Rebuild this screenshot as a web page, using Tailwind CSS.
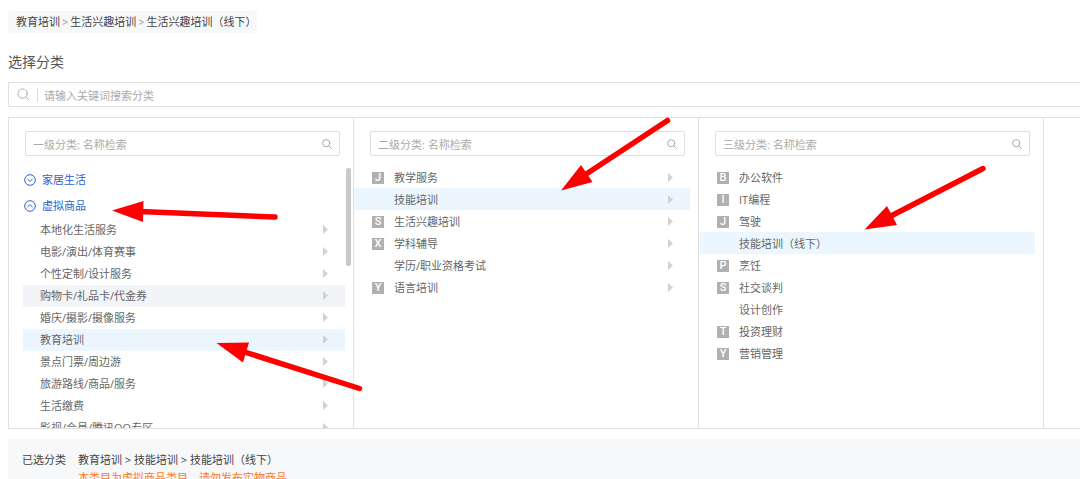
<!DOCTYPE html>
<html lang="zh-CN">
<head>
  <meta charset="UTF-8" />
  <meta name="viewport" content="width=device-width, initial-scale=1" />
  <title>选择分类</title>
  <script src="https://cdn.jsdelivr.net/npm/@tailwindcss/browser@4"></script>
</head>
<body class="relative min-h-screen overflow-hidden bg-white pl-2 font-['Open_Sans','Noto_Sans_CJK_SC',sans-serif] text-[11px] leading-4 text-[#666]">

  <nav aria-label="breadcrumb" class="mt-[11px] flex w-fit items-center gap-[2px] rounded-xs bg-[#f7f8fa] pl-2 leading-[22px] text-[#444]">
    <a href="#">教育培训</a>
    <span class="text-[#999]">&gt;</span>
    <a href="#">生活兴趣培训</a>
    <span class="text-[#999]">&gt;</span>
    <a href="#">生活兴趣培训（线下）</a>
  </nav>

  <h1 class="mt-[18px] text-sm leading-[22px] text-[#555]">选择分类</h1>

  <!-- buscador general -->
  <div class="mt-[9px] flex h-[25px] items-center rounded-l-xs border border-r-0 border-[#e0e0e0] pl-2">
    <svg class="size-[13px] text-[#aaa]" viewBox="0 0 14 14" fill="none" stroke="currentColor" stroke-linecap="round" aria-hidden="true">
      <circle cx="6" cy="6" r="5" />
      <path d="M9.7 9.7 L13 13" />
    </svg>
    <span class="ml-[7px] h-[14px] w-px bg-[#ddd]"></span>
    <input type="text" aria-label="搜索分类" placeholder="请输入关键词搜索分类" class="h-full flex-1 pt-[2px] pl-[6px] outline-none placeholder:text-[#aaa]" />
  </div>

  <main class="mt-[10px] flex h-[312px] border border-r-0 border-[#e0e0e0]">
    <section class="relative flex w-[345px] shrink-0 flex-col overflow-hidden border-r border-[#e0e0e0] pt-[13px]">
      <label class="mr-[13px] ml-4 flex h-[25px] shrink-0 items-center rounded-xs border border-[#dedede] px-[7px]">
        <input type="text" aria-label="一级分类" placeholder="一级分类: 名称检索" class="h-full min-w-0 flex-1 pt-[2px] outline-none placeholder:text-[#aaa]" />
        <svg class="size-[10px] text-[#aaa]" viewBox="0 0 10 10" fill="none" stroke="currentColor" stroke-linecap="round" aria-hidden="true">
          <circle cx="4.2" cy="4.2" r="3.6" />
          <path d="M6.9 6.9 L9.4 9.4" />
        </svg>
      </label>
      <div class="mt-[11px] mr-2 ml-[14px]">
        <button class="flex h-[26px] items-center gap-[6px] pl-px text-[#2f62c9]">
          <svg class="size-3" viewBox="0 0 12 12" fill="none" stroke="currentColor" aria-hidden="true">
            <circle cx="6" cy="6" r="5.3" />
            <path d="M3.4 5 L6 7.4 L8.6 5" />
          </svg>
          家居生活
        </button>
        <button class="flex h-[26px] items-center gap-[6px] pl-px text-[#2f62c9]">
          <svg class="size-3" viewBox="0 0 12 12" fill="none" stroke="currentColor" aria-hidden="true">
            <circle cx="6" cy="6" r="5.3" />
            <path d="M3.4 7 L6 4.600 L8.6 7" />
          </svg>
          虚拟商品
        </button>
        <ul id="nivel1"></ul>
      </div>
      <div class="absolute top-[50px] right-[2px] h-[98px] w-[5px] rounded-full bg-[#c9c9c9]"></div>
    </section>

    <section class="flex w-[345px] shrink-0 flex-col overflow-hidden border-r border-[#e0e0e0] pt-[13px]">
      <label class="mr-[13px] ml-4 flex h-[25px] shrink-0 items-center rounded-xs border border-[#dedede] px-[7px]">
        <input type="text" aria-label="二级分类" placeholder="二级分类: 名称检索" class="h-full min-w-0 flex-1 pt-[2px] outline-none placeholder:text-[#aaa]" />
        <svg class="size-[10px] text-[#aaa]" viewBox="0 0 10 10" fill="none" stroke="currentColor" stroke-linecap="round" aria-hidden="true">
          <circle cx="4.2" cy="4.2" r="3.6" />
          <path d="M6.9 6.9 L9.4 9.4" />
        </svg>
      </label>
      <ul id="nivel2" class="mt-[10px] mr-2"></ul>
    </section>

    <section class="flex w-[345px] shrink-0 flex-col overflow-hidden border-r border-[#e0e0e0] pt-[13px]">
      <label class="mr-[13px] ml-4 flex h-[25px] shrink-0 items-center rounded-xs border border-[#dedede] px-[7px]">
        <input type="text" aria-label="三级分类" placeholder="三级分类: 名称检索" class="h-full min-w-0 flex-1 pt-[2px] outline-none placeholder:text-[#aaa]" />
        <svg class="size-[10px] text-[#aaa]" viewBox="0 0 10 10" fill="none" stroke="currentColor" stroke-linecap="round" aria-hidden="true">
          <circle cx="4.2" cy="4.2" r="3.6" />
          <path d="M6.9 6.9 L9.4 9.4" />
        </svg>
      </label>
      <ul id="nivel3" class="mt-[10px] mr-2"></ul>
    </section>
  </main>

  <footer class="mt-[10px] flex gap-3 bg-[#f7f8fa] pt-3 pb-3 pl-[14px] leading-[18px] text-[#444]">
    <span>已选分类</span>
    <div>
      <p>教育培训 &gt; 技能培训 &gt; 技能培训（线下）</p>
      <p class="text-[#ff7a1a]">本类目为虚拟商品类目，请勿发布实物商品</p>
    </div>
  </footer>

  <!-- flechas rojas encima de la pagina -->
  <svg class="pointer-events-none absolute top-0 left-0 h-[479px] w-[1080px]" viewBox="0 0 1080 479" fill="#f00" stroke="#f00" stroke-linecap="round" aria-hidden="true">
    <g stroke-width="5.5">
      <path d="M140 211.5 L275 217" />
      <path d="M243 351.5 L359.5 388.5" />
      <path d="M584 175.5 L667.5 120.5" />
      <path d="M889 217 L983 168.5" />
    </g>
    <g stroke="none">
      <path d="M112 210.5 L143.5 201 L143 222 Z" />
      <path d="M216.5 343 L249 342.5 L243 362.5 Z" />
      <path d="M561 190.5 L581 165 L592.5 182 Z" />
      <path d="M864.5 229.5 L887 206 L897 225 Z" />
    </g>
  </svg>

  <script>
    const nivel1 = [
      { nombre: '本地化生活服务' },
      { nombre: '电影/演出/体育赛事' },
      { nombre: '个性定制/设计服务' },
      { nombre: '购物卡/礼品卡/代金券', fondo: 'bg-[#f3f4f8]' },
      { nombre: '婚庆/摄影/摄像服务' },
      { nombre: '教育培训', fondo: 'bg-[#ebf6ff]' },
      { nombre: '景点门票/周边游' },
      { nombre: '旅游路线/商品/服务' },
      { nombre: '生活缴费' },
      { nombre: '影视/会员/腾讯QQ专区' }
    ]

    const nivel2 = [
      { letra: 'J', nombre: '教学服务' },
      { nombre: '技能培训', fondo: 'bg-[#ebf6ff]' },
      { letra: 'S', nombre: '生活兴趣培训' },
      { letra: 'X', nombre: '学科辅导' },
      { nombre: '学历/职业资格考试' },
      { letra: 'Y', nombre: '语言培训' }
    ]

    const nivel3 = [
      { letra: 'B', nombre: '办公软件' },
      { letra: 'I', nombre: 'IT编程' },
      { letra: 'J', nombre: '驾驶' },
      { nombre: '技能培训（线下）', fondo: 'bg-[#ebf6ff]' },
      { letra: 'P', nombre: '烹饪' },
      { letra: 'S', nombre: '社交谈判' },
      { nombre: '设计创作' },
      { letra: 'T', nombre: '投资理财' },
      { letra: 'Y', nombre: '营销管理' }
    ]

    const flecha = '<svg class="ml-auto h-[10px] w-[5px]" viewBox="0 0 5 10" fill="#d2d2d2" aria-hidden="true"><path d="M0 0 L5 4.500 L0 9 Z" /></svg>'

    // letra inicial en gris, o el hueco vacio si repite la anterior
    function marca(letra) {
      if (!letra) return '<span class="size-3"></span>'
      return `<span class="size-3 bg-[#b0b0b0] text-center font-['Roboto',sans-serif] text-[11px] leading-3 font-medium text-white">${letra}</span>`
    }

    function mostrarLista(id, datos, conLetra, conFlecha) {
      document.getElementById(id).innerHTML = datos.map(d => `
        <li class="${d.fondo || ''}">
          <button class="${conLetra ? 'flex h-[22px] w-full items-center gap-[10px] pt-px pr-[17px] pl-[18px]' : 'flex h-[22px] w-full items-center pr-[17px] pl-[17px]'}">
            ${conLetra ? marca(d.letra) : ''}<span>${d.nombre}</span>${conFlecha ? flecha : ''}
          </button>
        </li>`).join('')
    }

    mostrarLista('nivel1', nivel1, false, true)
    mostrarLista('nivel2', nivel2, true, true)
    mostrarLista('nivel3', nivel3, true, false)
  </script>

</body>
</html>
